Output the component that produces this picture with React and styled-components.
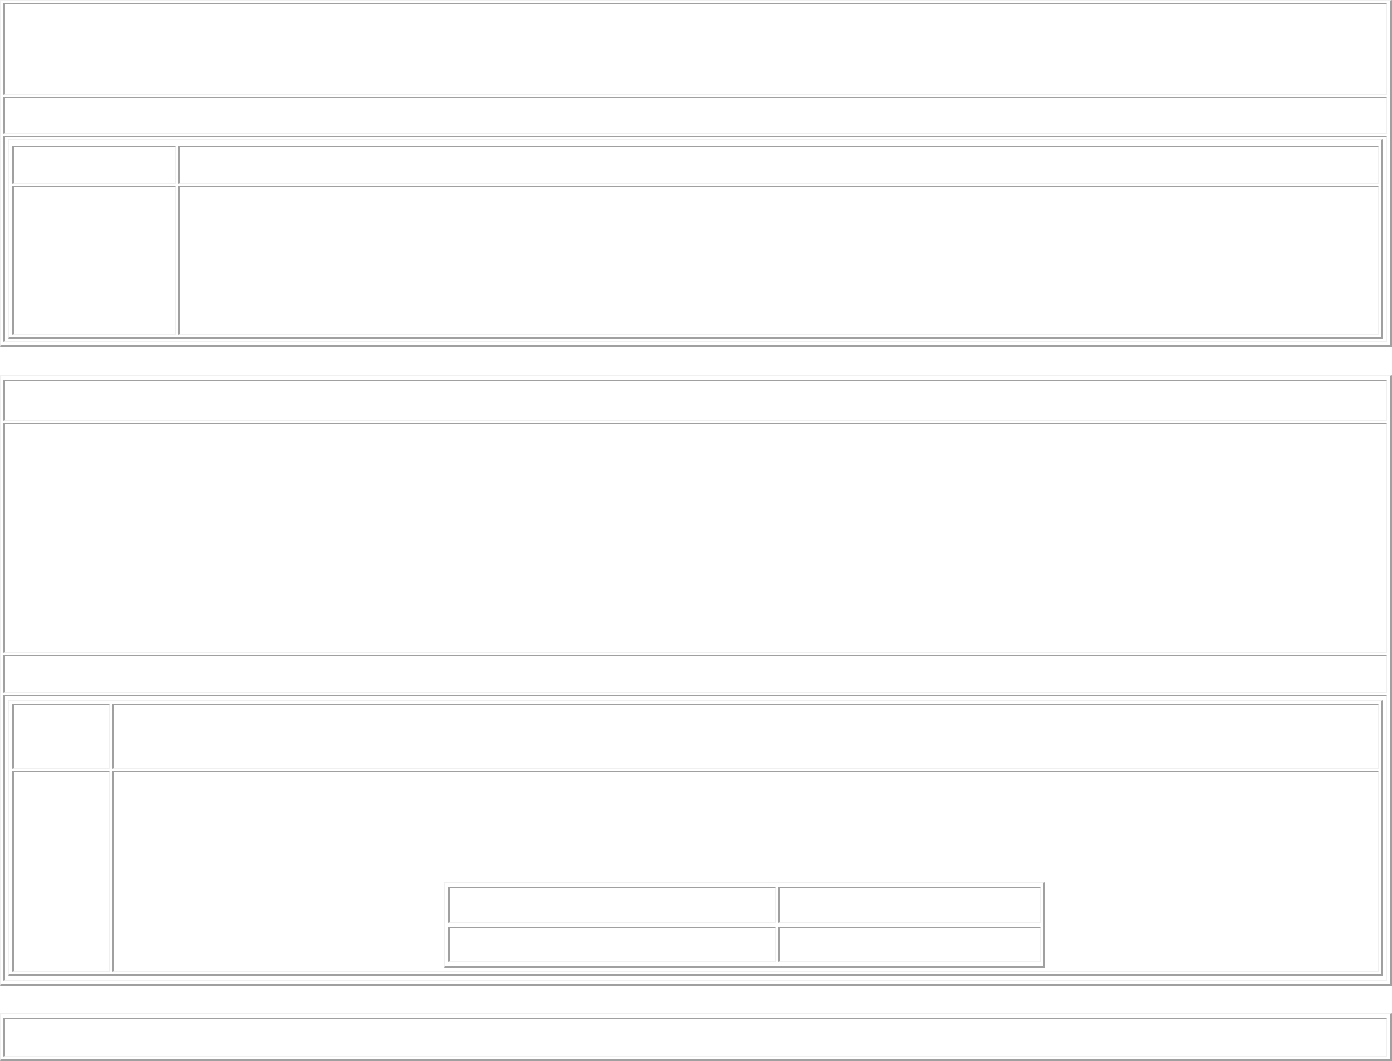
import styled, { createGlobalStyle } from 'styled-components'

const DARK = '#a0a0a0'
const LIGHT = '#f0f0f0'

const GlobalStyle = createGlobalStyle`
    * {
        box-sizing: border-box;
    }
    body {
        margin: 0;
        background: #fff;
        font-family: "Liberation Serif", serif;
    }
`

// raised frame, like an old table[border]
const Frame = styled.table`
    width: ${p => p.$width || '100%'};
    margin: ${p => p.$margin || '0'};
    padding: ${p => p.$pad || '0'};
    border-collapse: separate;
    border-spacing: ${p => p.$spacing || '2px'};
    border-style: solid;
    border-width: 1px 2px 2px 1px;
    border-color: ${LIGHT} ${DARK} ${DARK} ${LIGHT};
`

// sunken cell
const Cell = styled.td`
    height: ${p => p.$h}px;
    width: ${p => (p.$w ? `${p.$w}px` : 'auto')};
    padding: ${p => p.$pad || '0'};
    vertical-align: ${p => p.$valign || 'middle'};
    border-style: solid;
    border-width: 1px 1px 1px 2px;
    border-color: ${DARK} ${LIGHT} ${LIGHT} ${DARK};
`

function Header() {
    return (
        <Frame $pad="0 1px 1px 0">
            <tbody>
                <tr><Cell $h={92} /></tr>
                <tr><Cell $h={37} /></tr>
                <tr>
                    <Cell $h={206} $pad="2px 3px">
                        <Frame $pad="4px 0 0 1px">
                            <tbody>
                                <tr>
                                    <Cell $h={38} $w={164} />
                                    <Cell $h={38} />
                                </tr>
                                <tr>
                                    <Cell $h={149} />
                                    <Cell $h={149} />
                                </tr>
                            </tbody>
                        </Frame>
                    </Cell>
                </tr>
            </tbody>
        </Frame>
    )
}

function Summary() {
    return (
        <Frame $width="601px" $margin="0 auto" $spacing="2px 4px" $pad="0 0 0 1px">
            <tbody>
                <tr>
                    <Cell $h={36} $w={328} />
                    <Cell $h={36} />
                </tr>
                <tr>
                    <Cell $h={35} />
                    <Cell $h={35} />
                </tr>
            </tbody>
        </Frame>
    )
}

function Body() {
    return (
        <Frame $margin="28px 0 0" $pad="2px 1px 1px 0">
            <tbody>
                <tr><Cell $h={41} /></tr>
                <tr><Cell $h={230} /></tr>
                <tr><Cell $h={38} /></tr>
                <tr>
                    <Cell $h={286} $pad="4px 3px 4px">
                        <Frame $pad="1px 0 0 1px">
                            <tbody>
                                <tr>
                                    <Cell $h={65} $w={98} />
                                    <Cell $h={65} />
                                </tr>
                                <tr>
                                    <Cell $h={201} />
                                    <Cell $h={201} $valign="bottom" $pad="0 3px 3px 0">
                                        <Summary />
                                    </Cell>
                                </tr>
                            </tbody>
                        </Frame>
                    </Cell>
                </tr>
            </tbody>
        </Frame>
    )
}

function Footer() {
    return (
        <Frame $margin="27px 0 0" $pad="2px 1px 0 0">
            <tbody>
                <tr><Cell $h={39} /></tr>
            </tbody>
        </Frame>
    )
}

export default function App() {
    return (
        <>
            <GlobalStyle />
            <Header />
            <Body />
            <Footer />
        </>
    )
}
